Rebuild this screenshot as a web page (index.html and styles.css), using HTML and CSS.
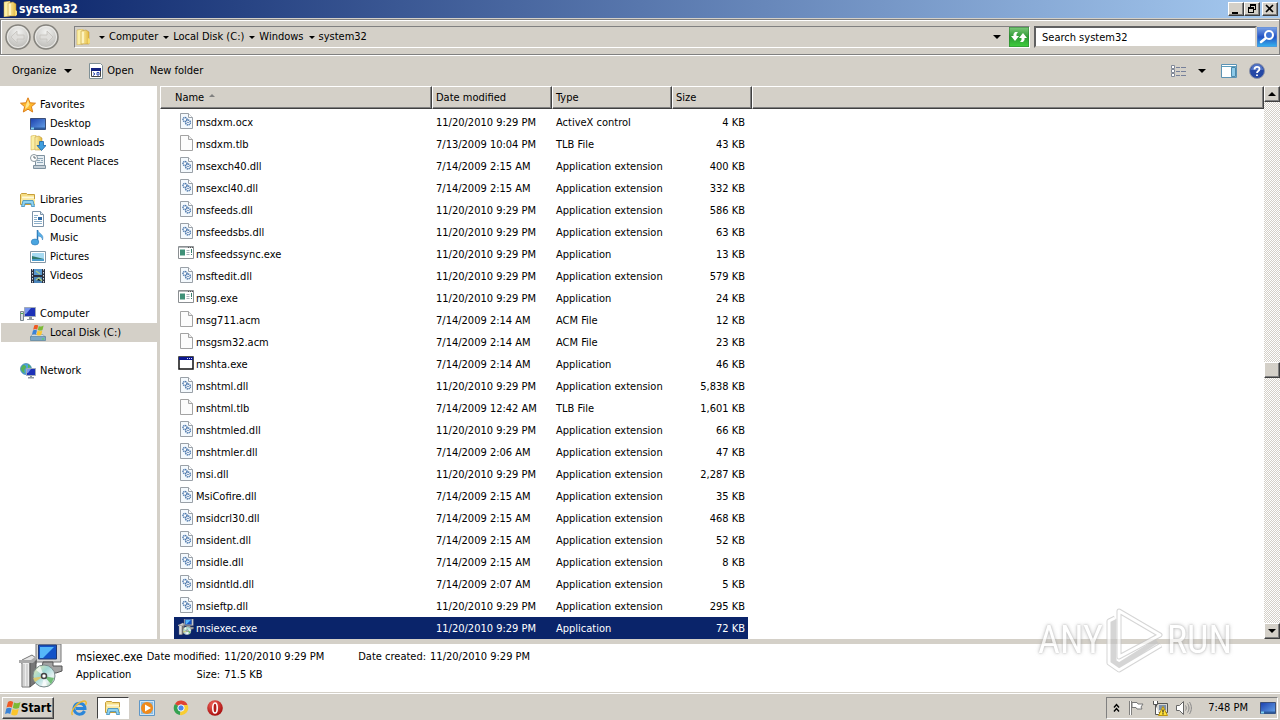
FILE: index.html
```html
<!DOCTYPE html>
<html lang="en">
<head>
    <meta charset="UTF-8">
    <meta name="viewport" content="width=device-width, initial-scale=1.0">
    <title>system32</title>
    <link rel="stylesheet" href="styles.css">
</head>
<body>

    <!-- Icon set -->
    <svg class="icon-set" aria-hidden="true">
        <defs>
            <linearGradient id="g-folder" x1="0" x2="1" y1="0" y2="0">
                <stop offset="0" stop-color="#fdf3b4"/>
                <stop offset="1" stop-color="#e3b93f"/>
            </linearGradient>
            <linearGradient id="g-screen" x1="0" x2="1" y1="0" y2="1">
                <stop offset="0" stop-color="#1b3fae"/>
                <stop offset="1" stop-color="#69a7ea"/>
            </linearGradient>
            <linearGradient id="g-green" x1="0" x2="0" y1="0" y2="1">
                <stop offset="0" stop-color="#7fc97c"/>
                <stop offset="0.5" stop-color="#2d9a34"/>
                <stop offset="1" stop-color="#3fd03c"/>
            </linearGradient>
            <linearGradient id="g-blue" x1="0" x2="0" y1="0" y2="1">
                <stop offset="0" stop-color="#7fa6e6"/>
                <stop offset="0.5" stop-color="#2353c4"/>
                <stop offset="1" stop-color="#35b6f0"/>
            </linearGradient>
            <linearGradient id="g-disc" x1="0" x2="1" y1="0" y2="1">
                <stop offset="0" stop-color="#f3e9a8"/>
                <stop offset="0.4" stop-color="#9fd8d4"/>
                <stop offset="0.7" stop-color="#e8f2f4"/>
                <stop offset="1" stop-color="#7fb98c"/>
            </linearGradient>
            <radialGradient id="g-red" cx="0.4" cy="0.3" r="0.7">
                <stop offset="0" stop-color="#f46a60"/>
                <stop offset="1" stop-color="#a80d0d"/>
            </radialGradient>
            <radialGradient id="g-nav" cx="0.5" cy="0.3" r="0.7">
                <stop offset="0" stop-color="#f2f2f0"/>
                <stop offset="1" stop-color="#b9b8b4"/>
            </radialGradient>
        </defs>
        <symbol id="i-folder" viewBox="0 0 16 16">
            <path d="M2 1l6-1v15l-6 1z" fill="#fbefa6" stroke="#cda63a" stroke-width=".5"/>
            <path d="M6 2l5-1 3 2v12H6z" fill="url(#g-folder)" stroke="#b98f2b" stroke-width=".5"/>
            <path d="M8 3v11" stroke="#fff7cc" stroke-width="1.5"/>
            <path d="M13 9l2 1v4l-2 1z" fill="#f6dc75"/>
        </symbol>
        <symbol id="i-back" viewBox="0 0 26 26">
            <circle cx="13" cy="13" r="12" fill="url(#g-nav)" stroke="#85837d" stroke-width="1.5"/>
            <circle cx="13" cy="13" r="10.5" fill="none" stroke="#eeedea" stroke-width="1"/>
            <path d="M6 13l6-6v4h7v4h-7v4z" fill="#dfdedb" stroke="#c4c2bd" stroke-width=".8"/>
        </symbol>
        <symbol id="i-refresh" viewBox="0 0 20 20">
            <rect width="20" height="20" rx="1" fill="url(#g-green)" stroke="#2c7a31"/>
            <path d="M2 9l4 5 4-5H7.500V7L9 5H6L4.500 7v2zM18 11l-4-5-4 5h2.500v2L11 15h3l1.500-2v-2z" fill="#fff"/>
        </symbol>
        <symbol id="i-search" viewBox="0 0 20 20">
            <rect width="20" height="20" rx="1" fill="url(#g-blue)" stroke="#5f87cf"/>
            <path d="M9 11l-5 4" stroke="#fff" stroke-width="2.500" stroke-linecap="round"/>
            <circle cx="12" cy="8" r="4" fill="#3e74d6" stroke="#fff" stroke-width="2"/>
        </symbol>
        <symbol id="i-window" viewBox="0 0 16 16">
            <path d="M1.500.5h11l2 2v13h-13z" fill="#fff" stroke="#7f9096"/>
            <path d="M3.500 5.500h9v8h-9z" fill="#fff" stroke="#444"/>
            <path d="M3 5h10v3H3z" fill="#14237e"/>
            <path d="M5 9.500l2 1.500-2 1.500M9 9.500h2v2.500H9z" stroke="#2c48b0" fill="none"/>
        </symbol>
        <symbol id="i-view" viewBox="0 0 16 16">
            <path d="M1.500 2.500h3v3h-3zM1.500 6.500h3v3h-3zM1.500 10.500h3v3h-3z" fill="#fff" stroke="#808897"/>
            <path d="M6 4.500h4M11 4.500h5M6 8.500h4M11 8.500h5M6 12.500h4M11 12.500h5" stroke="#76809a"/>
        </symbol>
        <symbol id="i-pane" viewBox="0 0 16 14">
            <path d="M.5.5h15v13H.5z" fill="#fff" stroke="#5c93b4"/>
            <path d="M10.500 3.500h4v9h-4z" fill="#8dc9e8" stroke="#2d7198" stroke-width=".8"/>
            <path d="M1 2.500h14" stroke="#5c9dbd"/>
        </symbol>
        <symbol id="i-help" viewBox="0 0 16 16">
            <circle cx="8" cy="8" r="7.500" fill="#2447a5" stroke="#8c93a8"/>
            <path d="M2 7a6 6 0 0 1 12 0z" fill="#6f90d8" opacity=".6"/>
            <path d="M5.500 6.500c0-3.500 5-3.500 5-.5C10.500 8 8 8 8 10M8 11.500v1.500" stroke="#fff" stroke-width="1.800" fill="none"/>
        </symbol>
        <symbol id="i-star" viewBox="0 0 16 16">
            <path d="M8 .8l2.100 5 5.400.4-4.100 3.500 1.300 5.300L8 12.200 3.300 15l1.300-5.300L.5 6.200l5.400-.4z" fill="#fdb92d" stroke="#dd7f1b"/>
            <path d="M8 3l1.500 4.500L8 10 5 12l1-4z" fill="#ffe58f"/>
        </symbol>
        <symbol id="i-desktop" viewBox="0 0 16 16">
            <path d="M.5 2.500h15v11H.5z" fill="url(#g-screen)" stroke="#3b4e78"/>
            <path d="M1 11.500h14v2H1z" fill="#2d5a9c"/>
            <path d="M1 11.500h3v2H1z" fill="#7fd0f0"/>
        </symbol>
        <symbol id="i-downloads" viewBox="0 0 16 16">
            <path d="M1 1l5-1v14l-5 1z" fill="#fbefa6" stroke="#cda63a" stroke-width=".5"/>
            <path d="M5 2l4-1 3 2v12H5z" fill="url(#g-folder)" stroke="#b98f2b" stroke-width=".5"/>
            <path d="M9.500 6.500h4v4h2.500L11.500 15.500 7 10.500h2.500z" fill="#3f9ede" stroke="#1c65a8" stroke-width=".8"/>
        </symbol>
        <symbol id="i-recent" viewBox="0 0 16 16">
            <path d="M5.500 1.500h9v10h-9z" fill="#e7eef3" stroke="#7e919f"/>
            <path d="M7 4.500h6M7 6.500h3M11 6.500h2M7 8.500h6" stroke="#8fa7b8"/>
            <path d="M3.500 11.500h12v3h-12z" fill="#c3ced6" stroke="#7e919f"/>
            <circle cx="4" cy="4" r="3.500" fill="#fff" stroke="#8a979f"/>
            <path d="M4 2v2h2" stroke="#5b6871" fill="none"/>
        </symbol>
        <symbol id="i-libraries" viewBox="0 0 16 16">
            <path d="M.5 2.500l1-1h5l1 1h7v10H.5z" fill="#f6dd83" stroke="#c79f3c"/>
            <path d="M2 4.500h12v2H2z" fill="#fff9d8"/>
            <path d="M1 7h14v5H1z" fill="#fae99f"/>
            <path d="M3 8.500h10l1.500 6h-3l-.5-3H5l-.5 3h-3z" fill="#8ed2f1" stroke="#3b8cbd" stroke-width=".8"/>
        </symbol>
        <symbol id="i-doc" viewBox="0 0 16 16">
            <path d="M2.500.5h8l3 3v12h-11z" fill="#fff" stroke="#7d93a8"/>
            <path d="M10.500.5v3h3" fill="#dce8f2" stroke="#7d93a8"/>
            <path d="M4 4.500h4M4 6.500h3M4 8.500h3M4 10.500h8M4 12.500h8" stroke="#8baec9"/>
            <path d="M8 6h4v3H8z" fill="#2d69a5"/>
        </symbol>
        <symbol id="i-music" viewBox="0 0 16 16">
            <path d="M7.500 0v12" stroke="#2875b5" stroke-width="1.500"/>
            <path d="M7.500 0c1 4 7 4 5 10 0-3-3-4-5-4z" fill="#5bb1e8" stroke="#2875b5" stroke-width=".5"/>
            <ellipse cx="5" cy="12" rx="3.800" ry="3" fill="#4aa5e0" stroke="#2875b5" stroke-width=".6"/>
        </symbol>
        <symbol id="i-pictures" viewBox="0 0 16 16">
            <path d="M.5 2.500h15v11H.5z" fill="#fff" stroke="#8397a6"/>
            <path d="M2 4h12v8H2z" fill="#a6daf2"/>
            <path d="M2 7l4 1 8 2v2H2z" fill="#2f7a6c"/>
            <path d="M2 10h12v2H2z" fill="#4a9ccb"/>
        </symbol>
        <symbol id="i-videos" viewBox="0 0 16 16">
            <path d="M1 1h14v14H1z" fill="#2a3140"/>
            <path d="M4 1h8v6H4z" fill="#5797cf"/>
            <path d="M4 9h8v6H4z" fill="#4a84ba"/>
            <path d="M6 3l4 3M6 12l3-2 3 3" stroke="#a8c98a" stroke-width="1.500"/>
            <path d="M2.500 1v14M13.500 1v14" stroke="#d7dee6" stroke-dasharray="1.500 1.500"/>
        </symbol>
        <symbol id="i-computer" viewBox="0 0 16 16">
            <path d="M.5 5.500h3v9h-3z" fill="#d9dee2" stroke="#7b868e"/>
            <path d="M1 7.500h2" stroke="#46b04c"/>
            <path d="M4.500 1.500h11v9h-11z" fill="#1d32b8" stroke="#a1abb8"/>
            <path d="M5 2h6l-5 6H5z" fill="#7693ee"/>
            <path d="M9 11h3v2h2v1H7v-1h2z" fill="#8e989f"/>
        </symbol>
        <symbol id="i-flag" viewBox="0 0 16 16">
            <path d="M3 2c2-1.500 3.500-1 5.200 0L6.900 7.500C5.300 6.500 3.500 6.500 1.500 7.500z" fill="#ef5a24"/>
            <path d="M9 2.500c2 1 4 1 6.500-.5L14 8c-2 1-4 1-6.200 0z" fill="#7cba35"/>
            <path d="M1.300 8.500c2-1 3.700-1 5.300 0L5.200 14C3.700 13 2 13 0 14z" fill="#3a83d6"/>
            <path d="M7.500 9c2 1 4 1 6.200 0L12.300 14.500c-2 1.500-4 1-6.200 0z" fill="#fbc52c"/>
        </symbol>
        <symbol id="i-disk" viewBox="0 0 16 16">
            <path d="M2 9.500h11l2.500 3H.5z" fill="#cfdbe4" stroke="#7e93a3" stroke-width=".6"/>
            <path d="M.5 11.500h15v4H.5z" fill="#7ba7c4" stroke="#4d7894" stroke-width=".6"/>
            <path d="M12 14h2" stroke="#4fe04c"/>
            <use href="#i-flag" x="2" y="-1" width="12" height="12"/>
        </symbol>
        <symbol id="i-network" viewBox="0 0 16 16">
            <circle cx="6" cy="6" r="5.500" fill="#4da3d8" stroke="#2a6f9e" stroke-width=".6"/>
            <path d="M3 2c3 0 4 2 2 4s1 4-1 4C2 9 1 7 1 5zM8 1l3 3-3 1z" fill="#56b256"/>
            <path d="M6.500 5.500h9v7h-9z" fill="#1d32b8" stroke="#a1abb8"/>
            <path d="M7 6h4l-3 4H7z" fill="#7693ee"/>
            <path d="M10 13h2v1h2v1.500H8V14h2z" fill="#8e989f"/>
        </symbol>
        <symbol id="i-dll" viewBox="0 0 16 16">
            <path d="M2.500.5h8l4 4v11h-12z" fill="#f4f9fd" stroke="#9aa1a8"/>
            <path d="M10.500.5v4h4" fill="#fff" stroke="#9aa1a8"/>
            <circle cx="7" cy="6.500" r="2" fill="#fff" stroke="#4a77ad" stroke-width="1.500" stroke-dasharray="1.200 .5"/>
            <circle cx="10" cy="9.500" r="2.400" fill="#fff" stroke="#4a77ad" stroke-width="1.500" stroke-dasharray="1.200 .5"/>
            <circle cx="10" cy="9.500" r=".8" fill="#4a77ad"/>
        </symbol>
        <symbol id="i-file" viewBox="0 0 16 16">
            <path d="M2.500.5h8l4 4v11h-12z" fill="#fcfcfc" stroke="#a3a3a3"/>
            <path d="M10.500.5v4h4" fill="#eee" stroke="#a3a3a3"/>
        </symbol>
        <symbol id="i-exe" viewBox="0 0 16 16">
            <path d="M.5 1.500h15v12H.5z" fill="#fff" stroke="#8b8f92"/>
            <path d="M1 2.500h14" stroke="#b3b7ba"/>
            <path d="M10 2.500h1M12 2.500h1M14 2.500h1" stroke="#555"/>
            <path d="M2 4.500h5v6H2z" fill="#3f9078"/>
            <path d="M8.500 5.500h3M8.500 7.500h3M8.500 9.500h3" stroke="#a9b3bb"/>
            <path d="M13.500 4v4M13.500 9v1" stroke="#3a7f6d"/>
        </symbol>
        <symbol id="i-app" viewBox="0 0 16 16">
            <path d="M1 2h14v12H1z" fill="#fff" stroke="#111" stroke-width="1.500"/>
            <path d="M1 2h14v3H1z" fill="#0a1690"/>
            <path d="M9 3.500h1M11 3.500h1M13 3.500h1" stroke="#cfd4ff"/>
        </symbol>
        <symbol id="i-installer" viewBox="0 0 44 44">
            <path d="M17 0h25v18H17z" fill="#d6d6d6" stroke="#777"/>
            <path d="M19.500 1h18v14h-18z" fill="#1353c8" stroke="#223a72"/>
            <path d="M21 3h14L24 14h-3z" fill="#55b7f8"/>
            <path d="M24 18h10v4h9v5l-6 2H22z" fill="#a3a3a3" stroke="#555"/>
            <path d="M3 16l10-5 4 3v6H3z" fill="#e6e6e6" stroke="#777"/>
            <path d="M3 18h8v25H3z" fill="#ececec" stroke="#777"/>
            <path d="M11 18l6-4v24l-6 5z" fill="#777" stroke="#555"/>
            <path d="M5 20v22M8 20v22" stroke="#bbb"/>
            <path d="M0 16h12l4-3h2v2l-4 4H0z" fill="#aaa"/>
            <circle cx="25" cy="32" r="11" fill="url(#g-disc)" stroke="#7a8a8c"/>
            <path d="M25 32l-8-6 4-4zM25 32l3 10-5 0z" fill="#fff" opacity=".7"/>
            <path d="M25 32l10 2-3 6z" fill="#59b35d" opacity=".8"/>
            <path d="M25 32l-9 6-2-4z" fill="#e7c65a" opacity=".8"/>
            <circle cx="25" cy="32" r="2.500" fill="#fff" stroke="#444" stroke-width="1.500"/>
        </symbol>
        <symbol id="i-ie" viewBox="0 0 16 16">
            <path d="M13.500 11A5.500 5.500 0 1 1 14 8.500H5" fill="none" stroke="#2b86d9" stroke-width="3"/>
            <path d="M1.500 15C-1 12 5 3 12 1.200c4-.8 3.500 2 2.500 3.800" fill="none" stroke="#f0b92d" stroke-width="1.400"/>
        </symbol>
        <symbol id="i-media" viewBox="0 0 16 16">
            <path d="M.5.5h15v15H.5z" fill="#cfe5f7" stroke="#5f97c7"/>
            <path d="M2 2h12v12H2z" fill="#8bbde4"/>
            <circle cx="8" cy="8" r="6" fill="#f08a1c"/>
            <path d="M6 4.500l6 3.500-6 3.500z" fill="#fff"/>
        </symbol>
        <symbol id="i-chrome" viewBox="0 0 16 16">
            <path d="M8 8L2 4a7 7 0 0 1 12.500 1z" fill="#df4334"/>
            <path d="M8 8L2 4a7 7 0 0 0 5 11z" fill="#35a250"/>
            <path d="M8 8l-1 7a7 7 0 0 0 7.500-10H8z" fill="#f9cd32"/>
            <circle cx="8" cy="8" r="3.200" fill="#4a86ee" stroke="#fff" stroke-width="1"/>
        </symbol>
        <symbol id="i-opera" viewBox="0 0 16 16">
            <circle cx="8" cy="8" r="7.800" fill="url(#g-red)"/>
            <ellipse cx="8" cy="8" rx="2.200" ry="5" fill="#b31a17" stroke="#fff" stroke-width="1.600"/>
        </symbol>
        <symbol id="i-action" viewBox="0 0 16 16">
            <path d="M2.500 1v14" stroke="#666" stroke-width="2.500"/>
            <path d="M2.500 1v14" stroke="#fff"/>
            <path d="M4 2.500h5l1 1.500h5l-2 3 1 2H9L8 7.500H4z" fill="#fff" stroke="#777"/>
        </symbol>
        <symbol id="i-lan" viewBox="0 0 16 16">
            <path d="M4.500 3.500h11v9h-11z" fill="#d6d6d2" stroke="#555"/>
            <path d="M7 5h7v5H7z" fill="#7c90a8"/>
            <path d="M1.500 1v3.500h4V1M3.500 4.500v10h4" fill="#fff" stroke="#555"/>
            <path d="M11 6.500l4.500 9h-9z" fill="#ffe03a" stroke="#bd9410"/>
            <path d="M11 9.500v3M11 13.300v1.200" stroke="#222" stroke-width="1.200"/>
        </symbol>
        <symbol id="i-sound" viewBox="0 0 16 16">
            <path d="M.5 5.500h3l4-4v13l-4-4h-3z" fill="#fff" stroke="#666"/>
            <path d="M9.500 5.500c1 1.500 1 3.500 0 5M11.500 3.500c2 3 2 6 0 9M13.500 2c2.500 4 2.500 8 0 12" fill="none" stroke="#888"/>
        </symbol>
    </svg>

    <header class="title-bar">
        <svg class="icon"><use href="#i-folder"/></svg>
        <h1>system32</h1>
        <div class="window-buttons">
            <button class="btn" aria-label="Minimize"><svg viewBox="0 0 10 10"><path d="M1 8h6v2H1z"/></svg></button>
            <button class="btn" aria-label="Restore"><svg viewBox="0 0 10 10"><path d="M3 0h6v6H7V5h1V2H4v1H3zM1 3h6v6H1zm1 2v3h4V5z" fill-rule="evenodd"/></svg></button>
            <button class="btn close" aria-label="Close"><svg viewBox="0 0 10 10"><path d="M1 1l7 7M8 1L1 8" stroke="#000" stroke-width="1.600"/></svg></button>
        </div>
    </header>

    <div class="nav-bar">
        <div class="nav-buttons">
            <button aria-label="Back"><svg><use href="#i-back"/></svg></button>
            <button class="forward" aria-label="Forward"><svg><use href="#i-back"/></svg></button>
        </div>
        <nav class="address">
            <svg class="icon"><use href="#i-folder"/></svg>
            <span class="arrow"></span><a href="#">Computer</a>
            <span class="arrow"></span><a href="#">Local Disk (C:)</a>
            <span class="arrow"></span><a href="#">Windows</a>
            <span class="arrow"></span><a href="#">system32</a>
            <button class="history" aria-label="Previous locations"><span class="arrow big"></span></button>
            <button class="square" aria-label="Refresh"><svg><use href="#i-refresh"/></svg></button>
        </nav>
        <div class="search">
            <input type="text" value="Search system32" aria-label="Search system32">
            <button class="square" aria-label="Search"><svg><use href="#i-search"/></svg></button>
        </div>
    </div>

    <div class="toolbar">
        <button>Organize <span class="arrow big"></span></button>
        <button class="open"><svg class="icon"><use href="#i-window"/></svg> Open</button>
        <button>New folder</button>
        <div class="toolbar-right">
            <button class="views" aria-label="Change your view"><svg class="icon"><use href="#i-view"/></svg><span class="arrow big"></span></button>
            <button aria-label="Show the preview pane"><svg class="icon"><use href="#i-pane"/></svg></button>
            <button aria-label="Get help"><svg class="icon"><use href="#i-help"/></svg></button>
        </div>
    </div>

    <div class="main">
        <aside class="sidebar">
            <ul>
                <li><a href="#"><svg class="icon"><use href="#i-star"/></svg>Favorites</a></li>
                <li class="child"><a href="#"><svg class="icon"><use href="#i-desktop"/></svg>Desktop</a></li>
                <li class="child"><a href="#"><svg class="icon"><use href="#i-downloads"/></svg>Downloads</a></li>
                <li class="child"><a href="#"><svg class="icon"><use href="#i-recent"/></svg>Recent Places</a></li>
            </ul>
            <ul>
                <li><a href="#"><svg class="icon"><use href="#i-libraries"/></svg>Libraries</a></li>
                <li class="child"><a href="#"><svg class="icon"><use href="#i-doc"/></svg>Documents</a></li>
                <li class="child"><a href="#"><svg class="icon"><use href="#i-music"/></svg>Music</a></li>
                <li class="child"><a href="#"><svg class="icon"><use href="#i-pictures"/></svg>Pictures</a></li>
                <li class="child"><a href="#"><svg class="icon"><use href="#i-videos"/></svg>Videos</a></li>
            </ul>
            <ul>
                <li><a href="#"><svg class="icon"><use href="#i-computer"/></svg>Computer</a></li>
                <li class="child active"><a href="#"><svg class="icon"><use href="#i-disk"/></svg>Local Disk (C:)</a></li>
            </ul>
            <ul>
                <li><a href="#"><svg class="icon"><use href="#i-network"/></svg>Network</a></li>
            </ul>
        </aside>

        <div class="file-list">
            <table>
                <colgroup>
                    <col class="col-name">
                    <col class="col-date">
                    <col class="col-type">
                    <col class="col-size">
                    <col>
                </colgroup>
                <thead>
                    <tr>
                        <th class="name">Name <span class="sort"></span></th>
                        <th>Date modified</th>
                        <th>Type</th>
                        <th>Size</th>
                        <td></td>
                    </tr>
                </thead>
                <tbody id="files"></tbody>
            </table>
        </div>

        <div class="scrollbar">
            <button class="btn" aria-label="Scroll up"><span class="arrow big up"></span></button>
            <div class="track"><div class="thumb"></div></div>
            <button class="btn" aria-label="Scroll down"><span class="arrow big"></span></button>
        </div>
    </div>

    <section class="details">
        <svg class="preview"><use href="#i-installer"/></svg>
        <div class="details-name">
            <p class="file-name">msiexec.exe</p>
            <p>Application</p>
        </div>
        <dl>
            <dt>Date modified:</dt><dd>11/20/2010 9:29 PM</dd>
            <dt>Size:</dt><dd>71.5 KB</dd>
        </dl>
        <dl>
            <dt>Date created:</dt><dd>11/20/2010 9:29 PM</dd>
        </dl>
    </section>

    <footer class="taskbar">
        <button class="btn start"><svg class="icon"><use href="#i-flag"/></svg>Start</button>
        <button class="task" aria-label="Internet Explorer"><svg class="icon"><use href="#i-ie"/></svg></button>
        <button class="task active" aria-label="Windows Explorer"><svg class="icon"><use href="#i-libraries"/></svg></button>
        <button class="task" aria-label="Media Player"><svg class="icon"><use href="#i-media"/></svg></button>
        <button class="task" aria-label="Chrome"><svg class="icon"><use href="#i-chrome"/></svg></button>
        <button class="task" aria-label="Opera"><svg class="icon"><use href="#i-opera"/></svg></button>
        <div class="tray">
            <svg class="chevron" viewBox="0 0 7 10"><path d="M1 4.500l2.500-3 2.500 3M1 8.500l2.500-3 2.500 3" fill="none" stroke="#000" stroke-width="1.400"/></svg>
            <svg class="icon"><use href="#i-action"/></svg>
            <svg class="icon"><use href="#i-lan"/></svg>
            <svg class="icon"><use href="#i-sound"/></svg>
            <time>7:48 PM</time>
            <svg class="icon"><use href="#i-desktop"/></svg>
        </div>
    </footer>

    <div class="watermark">
        <span>ANY</span>
        <svg viewBox="0 0 60 66">
            <g fill="none" stroke="#c4c4c4" stroke-width="5" stroke-linejoin="round">
                <path d="M14 4l41 24-41 22z"/>
                <path d="M10 11l-6 3v42l10 7 42-25M9 12v43l5 3 38-24"/>
            </g>
            <g fill="none" stroke="#fff" stroke-width="3" stroke-linejoin="round">
                <path d="M14 4l41 24-41 22z"/>
                <path d="M10 11l-6 3v42l10 7 42-25"/>
            </g>
        </svg>
        <span>RUN</span>
    </div>

    <script>
    const files = [
        ["dll", "msdxm.ocx", "11/20/2010 9:29 PM", "ActiveX control", "4 KB"],
        ["file", "msdxm.tlb", "7/13/2009 10:04 PM", "TLB File", "43 KB"],
        ["dll", "msexch40.dll", "7/14/2009 2:15 AM", "Application extension", "400 KB"],
        ["dll", "msexcl40.dll", "7/14/2009 2:15 AM", "Application extension", "332 KB"],
        ["dll", "msfeeds.dll", "11/20/2010 9:29 PM", "Application extension", "586 KB"],
        ["dll", "msfeedsbs.dll", "11/20/2010 9:29 PM", "Application extension", "63 KB"],
        ["exe", "msfeedssync.exe", "11/20/2010 9:29 PM", "Application", "13 KB"],
        ["dll", "msftedit.dll", "11/20/2010 9:29 PM", "Application extension", "579 KB"],
        ["exe", "msg.exe", "11/20/2010 9:29 PM", "Application", "24 KB"],
        ["file", "msg711.acm", "7/14/2009 2:14 AM", "ACM File", "12 KB"],
        ["file", "msgsm32.acm", "7/14/2009 2:14 AM", "ACM File", "23 KB"],
        ["app", "mshta.exe", "7/14/2009 2:14 AM", "Application", "46 KB"],
        ["dll", "mshtml.dll", "11/20/2010 9:29 PM", "Application extension", "5,838 KB"],
        ["file", "mshtml.tlb", "7/14/2009 12:42 AM", "TLB File", "1,601 KB"],
        ["dll", "mshtmled.dll", "11/20/2010 9:29 PM", "Application extension", "66 KB"],
        ["dll", "mshtmler.dll", "7/14/2009 2:06 AM", "Application extension", "47 KB"],
        ["dll", "msi.dll", "11/20/2010 9:29 PM", "Application extension", "2,287 KB"],
        ["dll", "MsiCofire.dll", "7/14/2009 2:15 AM", "Application extension", "35 KB"],
        ["dll", "msidcrl30.dll", "7/14/2009 2:15 AM", "Application extension", "468 KB"],
        ["dll", "msident.dll", "7/14/2009 2:15 AM", "Application extension", "52 KB"],
        ["dll", "msidle.dll", "7/14/2009 2:15 AM", "Application extension", "8 KB"],
        ["dll", "msidntld.dll", "7/14/2009 2:07 AM", "Application extension", "5 KB"],
        ["dll", "msieftp.dll", "11/20/2010 9:29 PM", "Application extension", "295 KB"],
        ["installer", "msiexec.exe", "11/20/2010 9:29 PM", "Application", "72 KB"],
    ];

    const tbody = document.getElementById('files');
    files.forEach(([icon, name, date, type, size]) => {
        const row = document.createElement('tr');
        if (name === "msiexec.exe") {
            row.classList.add('selected');
        }
        row.innerHTML = `
            <td class="name"><div><svg class="icon"><use href="#i-${icon}"/></svg><span>${name}</span></div></td>
            <td>${date}</td>
            <td>${type}</td>
            <td class="size">${size}</td>
        `;
        tbody.appendChild(row);
    });
    </script>

</body>
</html>
```
FILE: styles.css
```css
* {
    margin: 0;
    padding: 0;
    box-sizing: border-box;
}
body {
    display: flex;
    flex-direction: column;
    height: 100vh;
    overflow: hidden;
    background-color: #d4d0c8;
    color: #000;
    font-family: Tahoma, "DejaVu Sans Condensed", "Noto Sans", sans-serif;
    font-size: 11px;
    line-height: 14px;
    white-space: nowrap;
}
button, input {
    font: inherit;
    color: inherit;
}
button {
    display: flex;
    align-items: center;
    background: none;
    border: none;
}
a {
    color: inherit;
    text-decoration: none;
}
svg {
    display: block;
    flex: none;
}
.icon {
    width: 16px;
    height: 16px;
}
.icon-set {
    position: absolute;
    width: 0;
    height: 0;
}
.btn {
    justify-content: center;
    background-color: #d4d0c8;
    border: 1px solid;
    border-color: #fff #404040 #404040 #fff;
    box-shadow: inset -1px -1px #808080;
}
.arrow {
    border: 3px solid transparent;
    border-top-color: #000;
    border-bottom: none;
}
.arrow.big {
    border-width: 4px;
    border-bottom: none;
}
.arrow.up {
    border: 4px solid transparent;
    border-bottom-color: #000;
    border-top: none;
}

/* Title bar */
.title-bar {
    display: flex;
    align-items: center;
    height: 18px;
    padding: 0 2px;
    background: linear-gradient(to right, #0a246a, #a6caf0);
}
.title-bar h1 {
    flex: 1;
    margin-left: 1px;
    color: #fff;
    font-size: 12px;
    font-weight: bold;
}
.window-buttons {
    display: flex;
}
.window-buttons .btn {
    width: 16px;
    height: 14px;
}
.window-buttons .close {
    margin-left: 2px;
}
.window-buttons svg {
    width: 10px;
    height: 10px;
}

/* Address row */
.nav-bar {
    display: flex;
    align-items: center;
    height: 36px;
    margin-top: 1px;
    padding: 0 2px 0 4px;
    border: 1px solid #808080;
    box-shadow: inset 1px 1px #fff, 0 1px #fff;
}
.nav-buttons {
    display: flex;
    gap: 2px;
    margin-right: 15px;
}
.nav-buttons svg {
    width: 26px;
    height: 26px;
}
.nav-buttons .forward {
    transform: scaleX(-1);
}
.address {
    display: flex;
    flex: 1;
    align-items: center;
    height: 22px;
    border: 1px solid;
    border-color: #808080 #fff #fff #808080;
}
.address .arrow {
    margin: 0 4px 0 5px;
}
.address .icon + .arrow {
    margin-left: 8px;
}
.history {
    margin-left: auto;
    padding: 6px 4px;
}
.square svg {
    width: 20px;
    height: 20px;
}
.search {
    display: flex;
    align-items: center;
    width: 243px;
    margin-left: 4px;
}
.search input {
    flex: 1;
    min-width: 0;
    height: 22px;
    padding: 0 6px;
    background-color: #fff;
    border: 2px solid;
    border-color: #606060 #d4d0c8 #d4d0c8 #606060;
    outline: none;
}

/* Command bar */
.toolbar {
    display: flex;
    align-items: center;
    height: 31px;
    padding: 0 15px 0 12px;
}
.toolbar button {
    margin-right: 16px;
    gap: 8px;
}
.toolbar .open {
    gap: 3px;
}
.toolbar-right {
    display: flex;
    gap: 12px;
    margin-left: auto;
}
.toolbar-right button {
    margin: 0;
}
.toolbar-right .views {
    gap: 12px;
    margin-right: 3px;
}

/* Folder tree and file list */
.main {
    display: flex;
    flex: 1;
    min-height: 0;
    background-color: #fff;
}
.sidebar {
    width: 160px;
    padding: 9px 0 0 1px;
    border-right: 3px solid #d4d0c8;
}
.sidebar ul {
    margin-bottom: 19px;
    list-style-type: none;
}
.sidebar a {
    display: flex;
    align-items: center;
    gap: 4px;
    height: 19px;
    padding-left: 19px;
    line-height: 16px;
}
.sidebar .child a {
    padding-left: 29px;
}
.sidebar .active {
    background-color: #d4d0c8;
}
.file-list {
    flex: 1;
    min-width: 0;
    overflow: hidden;
}
.file-list table {
    width: 100%;
    table-layout: fixed;
    border-collapse: separate;
    border-spacing: 0;
}
.col-name {
    width: 272px;
}
.col-date, .col-type {
    width: 120px;
}
.col-size {
    width: 80px;
}
thead th, thead td {
    height: 23px;
    padding: 1px 3px 0;
    background-color: #d4d0c8;
    border: 1px solid;
    border-color: #fff #404040 #404040 #fff;
    box-shadow: inset -1px -1px #808080;
    font-weight: normal;
    text-align: left;
}
thead .name {
    padding-left: 14px;
}
.sort {
    display: inline-block;
    margin: 0 0 4px 2px;
    border: 3px solid transparent;
    border-bottom-color: #808080;
    border-top: none;
}
tbody::before {
    content: "";
    display: block;
    height: 2px;
}
tbody td {
    height: 22px;
    padding: 2px 4px 0;
    background-clip: padding-box;
}
tbody .name {
    padding-top: 0;
    border-left: 14px solid transparent;
}
tbody .name div {
    display: flex;
    gap: 2px;
    height: 18px;
}
tbody .name span {
    padding-top: 3px;
}
tbody .size {
    padding-right: 3px;
    border-right: 4px solid transparent;
    text-align: right;
}
.selected td {
    background-color: #0a246a;
    color: #fff;
}
.scrollbar {
    display: flex;
    flex-direction: column;
    width: 16px;
}
.scrollbar .btn {
    height: 16px;
}
.track {
    display: flex;
    flex: 1;
    flex-direction: column;
    background: repeating-conic-gradient(#d4d0c8 0 25%, #fff 0 50%) 0 0 / 2px 2px;
}
.track::before {
    content: "";
    flex: 52;
}
.track::after {
    content: "";
    flex: 49;
}
.thumb {
    height: 16px;
    background-color: #d4d0c8;
    border: 1px solid;
    border-color: #fff #404040 #404040 #fff;
    box-shadow: inset -1px -1px #808080;
}

/* Details pane */
.details {
    display: flex;
    height: 53px;
    padding-left: 19px;
    background-color: #fff;
    border-top: 5px solid #d4d0c8;
}
.preview {
    width: 44px;
    height: 44px;
    margin-right: 13px;
}
.details p, .details dt, .details dd {
    height: 18px;
    line-height: 18px;
}
.details-name {
    padding-top: 4px;
}
.details .file-name {
    font-size: 12px;
}
.details dl {
    display: grid;
    grid-template-columns: auto auto;
    align-content: start;
    column-gap: 4px;
    margin: 4px 30px 0 4px;
}
.details dt {
    text-align: right;
}

/* Taskbar */
.taskbar {
    display: flex;
    align-items: center;
    height: 28px;
    padding: 2px 2px 0;
    border-top: 1px solid #d4d0c8;
    box-shadow: inset 0 1px #fff;
}
.start {
    width: 52px;
    height: 22px;
    margin-right: 9px;
    font-size: 12px;
    font-weight: bold;
}
.task {
    justify-content: center;
    width: 32px;
    height: 22px;
    margin-right: 2px;
}
.task.active {
    background-color: #fff;
    border: 1px solid;
    border-color: #404040 #fff #fff #404040;
}
.tray {
    display: flex;
    align-items: center;
    gap: 8px;
    height: 22px;
    margin-left: auto;
    padding: 0 1px 0 6px;
    border: 1px solid;
    border-color: #808080 #fff #fff #808080;
}
.tray .chevron {
    width: 7px;
    height: 10px;
}
.tray time {
    margin: 0 4px 0 8px;
}

/* Overlay logo */
.watermark {
    position: fixed;
    right: 48px;
    bottom: 47px;
    display: flex;
    align-items: center;
    gap: 2px;
    color: #fff;
    font-family: "Liberation Sans Narrow", "Roboto Condensed", Roboto, sans-serif;
    font-size: 38px;
    line-height: 66px;
    text-shadow: 0 0 2px #999, 0 0 4px #aaa;
    opacity: 0.7;
    pointer-events: none;
}
.watermark svg {
    width: 60px;
    height: 66px;
}
```
